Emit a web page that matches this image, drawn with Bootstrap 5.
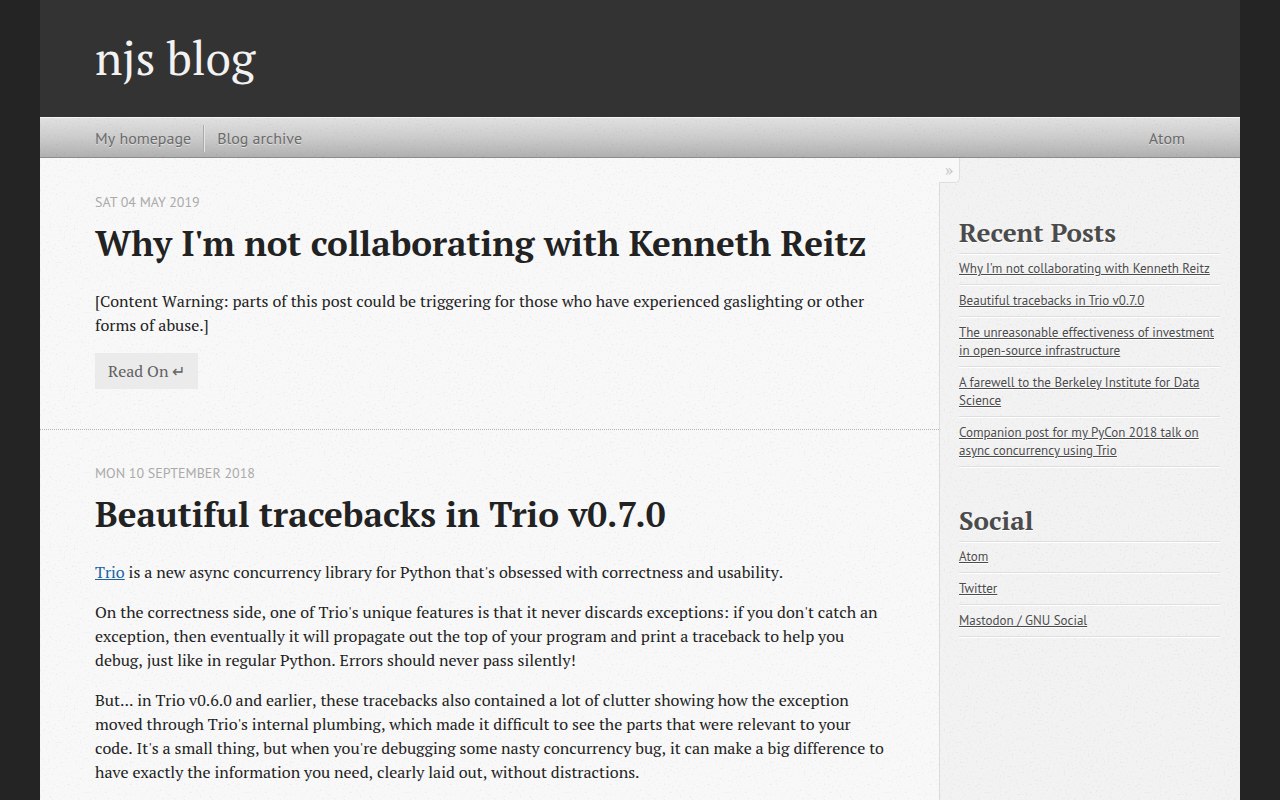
<!DOCTYPE html>
<html lang="en">
<head>
<meta charset="utf-8">
<meta name="viewport" content="width=device-width, initial-scale=1">
<title>njs blog</title>
<link href="https://cdn.jsdelivr.net/npm/bootstrap@5.3.0/dist/css/bootstrap.min.css" rel="stylesheet">
<style>
  :root {
    --serif: "PT Serif", "Liberation Serif", serif;
    --sans: "PT Sans", "DejaVu Sans Condensed", sans-serif;
    /* fine paper speckle laid over every light surface */
    --grain: url("data:image/svg+xml,%3Csvg xmlns='http://www.w3.org/2000/svg' width='160' height='160'%3E%3Cfilter id='n'%3E%3CfeTurbulence type='fractalNoise' baseFrequency='.5' numOctaves='2' stitchTiles='stitch'/%3E%3CfeColorMatrix values='0 0 0 0 0 0 0 0 0 0 0 0 0 0 0 .2 0 0 0 -.118'/%3E%3C/filter%3E%3Crect width='160' height='160' filter='url(%23n)'/%3E%3C/svg%3E");
  }
  body { background: #242424; color: #222; font: 16px/24px var(--serif); font-kerning: none; }
  h1, h2 { font-kerning: normal; }
  .page { max-width: 1200px; background: #f8f8f8; }
  .masthead { background: #333; padding: 27px 55px 28px; }
  .site-title { font-size: 46px; line-height: 62px; font-weight: 400; }
  .site-title a { color: #f2f2f2; }
  .menu-bar {
    padding: 7px 55px 5px;
    background: var(--grain), linear-gradient(#e0e0e0, #cccccc 50%, #b0b0b0);
    border-top: 1px solid #f6f6f6; border-bottom: 1px solid #8c8c8c;
    font: 16px/27px var(--sans); font-kerning: none; text-shadow: 0 1px #e0e0e0;
  }
  .menu-bar a { color: #6b6b6b; }
  .menu-bar li + li { border-left: 1px solid #aaa; box-shadow: inset 1px 0 #e4e4e4; margin-left: 12px; padding-left: 13px; }
  .posts { background: var(--grain), #f8f8f8; min-width: 0; }
  .post { padding: 34px 53px 40px 55px; }
  .post + .post { border-top: 1px dotted #b4b4b4; padding-top: 33px; padding-bottom: 0; }
  .post time { font: 14px/20px var(--sans); color: #aaa; }
  .post h1 { font-size: 35px; line-height: 46px; font-weight: 700; margin: 8px 0 23px; }
  .post h1 a { color: #222; }
  .post p a { color: #1863a1; }
  .read-on { background: #ebebeb; color: #626262; padding: 6px 13px; }
  .side { width: 301px; background: var(--grain), #f2f2f2; border-left: 1px solid #dcdcdc; padding: 56px 20px 40px 19px; }
  .side h2 { font-size: 26px; line-height: 36px; font-weight: 700; color: #4b4b4b; margin: 0; padding-bottom: 3px; text-shadow: 0 1px #fff; }
  .side ul { border-top: 1px solid #dedede; box-shadow: inset 0 1px #fff; margin-bottom: 35px; }
  .side li { padding: 6px 0; border-bottom: 1px solid #dedede; box-shadow: 0 1px #fff; font: 13px/18px var(--sans); margin-bottom: 1px; }
  .side li a { color: #4b4b4b; text-shadow: 0 1px #fff; }
  .fold {
    top: 0; left: -1px; width: 21px; height: 25px; color: #c4c4c4; background: #f8f8f8;
    border: solid #dedede; border-width: 0 1px 1px 0; border-radius: 0 0 5px 0;
    padding: 0 0 2px; font: 18px/20px var(--serif);
  }
</style>
</head>
<body>
<div class="page d-flex flex-column min-vh-100 mx-auto">
  <header class="masthead">
    <div class="site-title"><a class="text-decoration-none" href="#">njs blog</a></div>
  </header>
  <nav class="menu-bar d-flex justify-content-between">
    <ul class="list-unstyled d-flex mb-0">
      <li><a class="text-decoration-none" href="#">My homepage</a></li>
      <li><a class="text-decoration-none" href="#">Blog archive</a></li>
    </ul>
    <a class="text-decoration-none" href="#">Atom</a>
  </nav>
  <div class="d-flex flex-grow-1">
    <main class="posts flex-grow-1">
      <article class="post">
        <time class="d-block text-uppercase" datetime="2019-05-04">Sat 04 May 2019</time>
        <h1><a class="text-decoration-none" href="#">Why I'm not collaborating with Kenneth Reitz</a></h1>
        <p class="mb-3">[Content Warning: parts of this post could be triggering for those who have experienced gaslighting or other forms of abuse.]</p>
        <a class="read-on d-table text-decoration-none" href="#">Read On ↵</a>
      </article>
      <article class="post">
        <time class="d-block text-uppercase" datetime="2018-09-10">Mon 10 September 2018</time>
        <h1><a class="text-decoration-none" href="#">Beautiful tracebacks in Trio v0.7.0</a></h1>
        <p class="mb-3"><a href="#">Trio</a> is a new async concurrency library for Python that's obsessed with correctness and usability.</p>
        <p class="mb-3">On the correctness side, one of Trio's unique features is that it never discards exceptions: if you don't catch an exception, then eventually it will propagate out the top of your program and print a traceback to help you debug, just like in regular Python. Errors should never pass silently!</p>
        <p class="mb-3">But... in Trio v0.6.0 and earlier, these tracebacks also contained a lot of clutter showing how the exception moved through Trio's internal plumbing, which made it difficult to see the parts that were relevant to your code. It's a small thing, but when you're debugging some nasty concurrency bug, it can make a big difference to have exactly the information you need, clearly laid out, without distractions.</p>
      </article>
    </main>
    <aside class="side position-relative flex-shrink-0">
      <button class="fold position-absolute" type="button" aria-label="Toggle sidebar">»</button>
      <section>
        <h2>Recent Posts</h2>
        <ul class="list-unstyled">
          <li><a href="#">Why I'm not collaborating with Kenneth Reitz</a></li>
          <li><a href="#">Beautiful tracebacks in Trio v0.7.0</a></li>
          <li><a href="#">The unreasonable effectiveness of investment in open-source infrastructure</a></li>
          <li><a href="#">A farewell to the Berkeley Institute for Data Science</a></li>
          <li><a href="#">Companion post for my PyCon 2018 talk on async concurrency using Trio</a></li>
        </ul>
      </section>
      <section>
        <h2>Social</h2>
        <ul class="list-unstyled">
          <li><a href="#">Atom</a></li>
          <li><a href="#">Twitter</a></li>
          <li><a href="#">Mastodon / GNU Social</a></li>
        </ul>
      </section>
    </aside>
  </div>
</div>
<script src="https://cdn.jsdelivr.net/npm/bootstrap@5.3.0/dist/js/bootstrap.bundle.min.js"></script>
</body>
</html>
